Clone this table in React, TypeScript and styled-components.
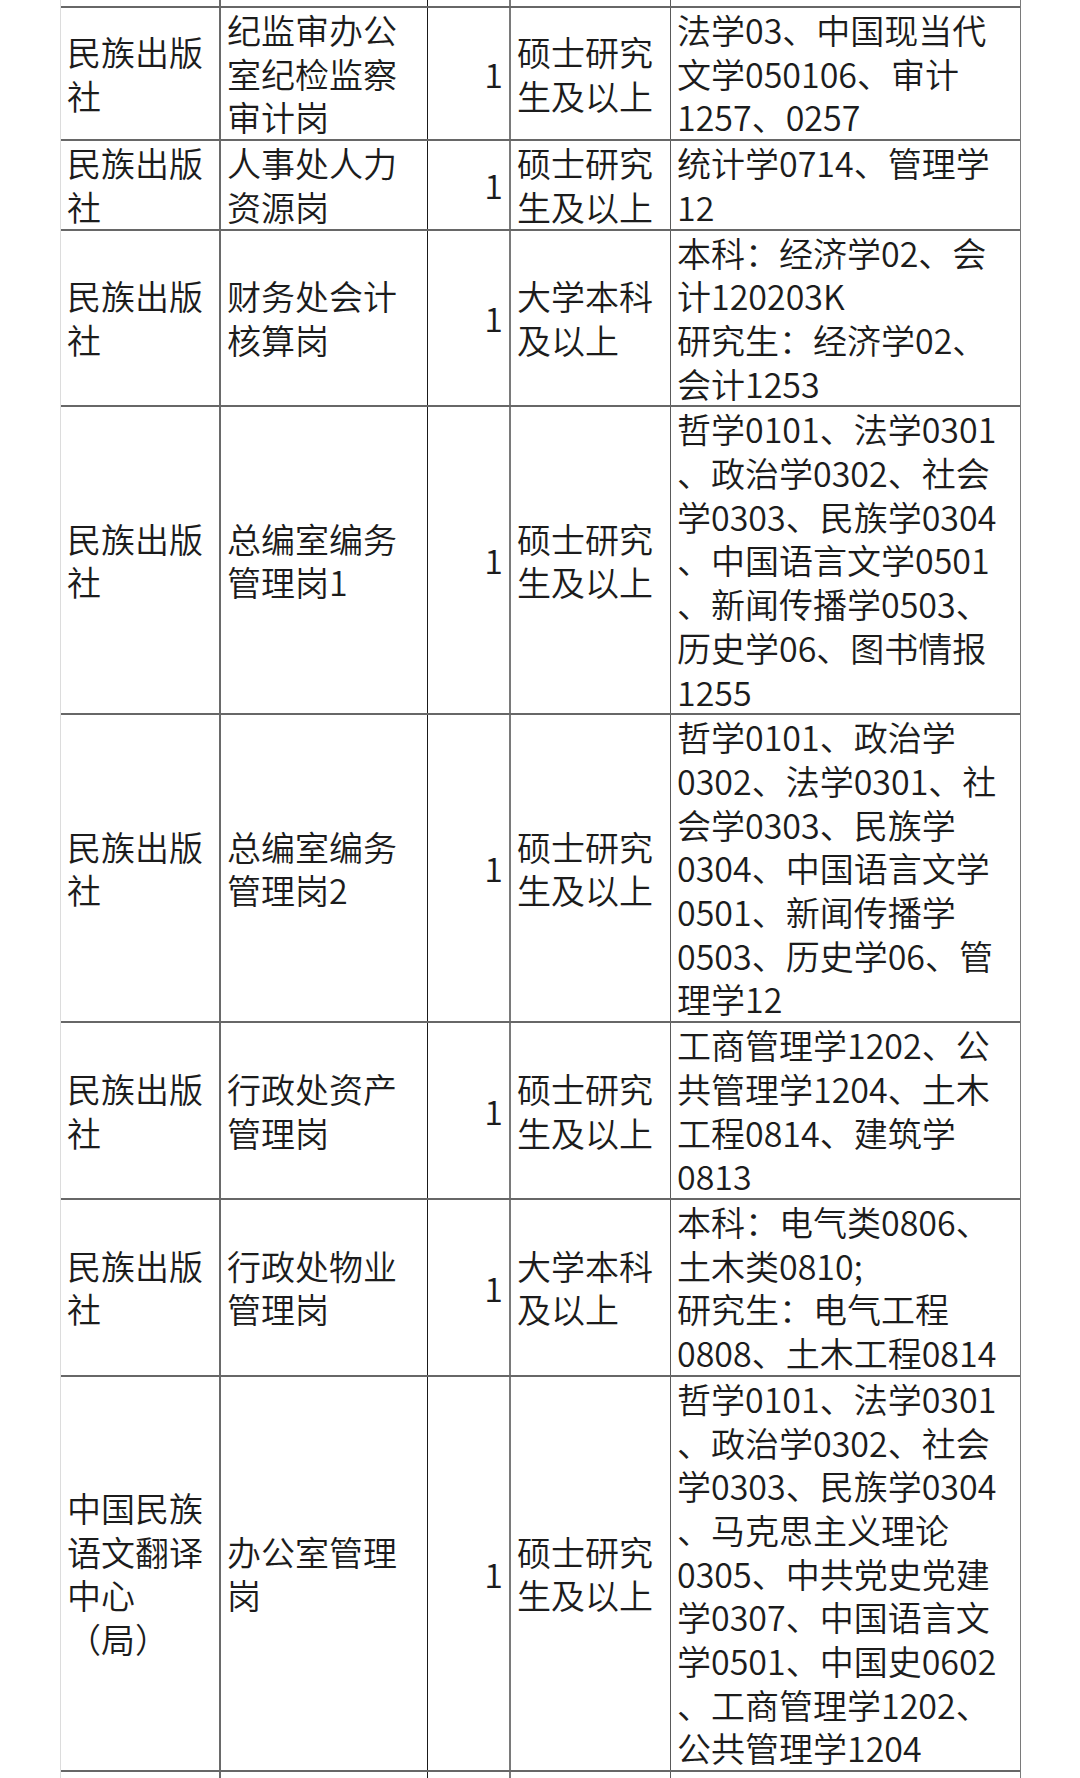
import React from "react";
import styled, { createGlobalStyle } from "styled-components";

const GlobalStyle = createGlobalStyle`
  html, body {
    margin: 0;
    padding: 0;
    background: #ffffff;
  }
  body {
    font-family: "Noto Sans CJK SC", "Noto Sans", sans-serif;
    color: #1c1c1c;
  }
`;

const Page = styled.div`
  width: 1080px;
  height: 1778px;
  overflow: hidden;
  padding-left: 60px;
  box-sizing: border-box;
  background: #fff;
`;

const Table = styled.div`
  width: 961px;
  display: flex;
  flex-direction: column;
  border-left: 1px solid #dcdcdc;
  border-right: 1px solid #7a7a7a;
  box-sizing: border-box;
`;

const Row = styled.div<{ $clip?: number }>`
  display: grid;
  grid-template-columns: 160px 207px 83px 160px 349px;
  border-bottom: 2px solid #676767;
  ${(p) => (p.$clip !== undefined ? `height: ${p.$clip}px; overflow: hidden;` : "")}
`;

type Align = "start" | "center" | "end";

const Cell = styled.div<{ $rule: string; $v: Align; $h: Align }>`
  display: flex;
  flex-direction: column;
  justify-content: ${(p) =>
    p.$v === "start" ? "flex-start" : p.$v === "end" ? "flex-end" : "center"};
  align-items: ${(p) =>
    p.$h === "end" ? "flex-end" : p.$h === "center" ? "center" : "flex-start"};
  padding: 0 6px;
  border-right: ${(p) => p.$rule};
  box-sizing: border-box;
  min-width: 0;
  &:last-child {
    border-right: none;
  }
`;

const Line = styled.span`
  display: block;
  white-space: nowrap;
  font-size: 34px;
  font-weight: 350;
  line-height: 43.7px;
  flex: none;
`;

const rules = [
  "2px solid #6a6a6a",
  "1px solid #1a1a1a",
  "2px solid #7a7a7a",
  "1px solid #5a5a5a",
  "none",
];

type RowData = {
  unit: string[];
  post: string[];
  count: string;
  edu: string[];
  major: string[];
};

const MS = ["硕士研究", "生及以上"];
const BK = ["大学本科", "及以上"];
const MZ = ["民族出版", "社"];

const rows: RowData[] = [
  {
    unit: MZ,
    post: ["纪监审办公", "室纪检监察", "审计岗"],
    count: "1",
    edu: MS,
    major: ["法学03、中国现当代", "文学050106、审计", "1257、0257"],
  },
  {
    unit: MZ,
    post: ["人事处人力", "资源岗"],
    count: "1",
    edu: MS,
    major: ["统计学0714、管理学", "12"],
  },
  {
    unit: MZ,
    post: ["财务处会计", "核算岗"],
    count: "1",
    edu: BK,
    major: ["本科：经济学02、会", "计120203K", "研究生：经济学02、", "会计1253"],
  },
  {
    unit: MZ,
    post: ["总编室编务", "管理岗1"],
    count: "1",
    edu: MS,
    major: [
      "哲学0101、法学0301",
      "、政治学0302、社会",
      "学0303、民族学0304",
      "、中国语言文学0501",
      "、新闻传播学0503、",
      "历史学06、图书情报",
      "1255",
    ],
  },
  {
    unit: MZ,
    post: ["总编室编务", "管理岗2"],
    count: "1",
    edu: MS,
    major: [
      "哲学0101、政治学",
      "0302、法学0301、社",
      "会学0303、民族学",
      "0304、中国语言文学",
      "0501、新闻传播学",
      "0503、历史学06、管",
      "理学12",
    ],
  },
  {
    unit: MZ,
    post: ["行政处资产", "管理岗"],
    count: "1",
    edu: MS,
    major: ["工商管理学1202、公", "共管理学1204、土木", "工程0814、建筑学", "0813"],
  },
  {
    unit: MZ,
    post: ["行政处物业", "管理岗"],
    count: "1",
    edu: BK,
    major: ["本科：电气类0806、", "土木类0810;", "研究生：电气工程", "0808、土木工程0814"],
  },
  {
    unit: ["中国民族", "语文翻译", "中心", "（局）"],
    post: ["办公室管理", "岗"],
    count: "1",
    edu: MS,
    major: [
      "哲学0101、法学0301",
      "、政治学0302、社会",
      "学0303、民族学0304",
      "、马克思主义理论",
      "0305、中共党史党建",
      "学0307、中国语言文",
      "学0501、中国史0602",
      "、工商管理学1202、",
      "公共管理学1204",
    ],
  },
];

const Lines: React.FC<{ items: string[] }> = ({ items }) => (
  <>
    {items.map((t, i) => (
      <Line key={i}>{t}</Line>
    ))}
  </>
);

const DataRow: React.FC<{ r: RowData }> = ({ r }) => (
  <Row>
    <Cell $rule={rules[0]} $v="center" $h="start">
      <Lines items={r.unit} />
    </Cell>
    <Cell $rule={rules[1]} $v="center" $h="start">
      <Lines items={r.post} />
    </Cell>
    <Cell $rule={rules[2]} $v="center" $h="end">
      <Line>{r.count}</Line>
    </Cell>
    <Cell $rule={rules[3]} $v="center" $h="start">
      <Lines items={r.edu} />
    </Cell>
    <Cell $rule={rules[4]} $v="start" $h="start">
      <Lines items={r.major} />
    </Cell>
  </Row>
);

const EdgeRow: React.FC<{ height: number; major?: string }> = ({ height, major }) => (
  <Row $clip={height}>
    <Cell $rule={rules[0]} $v="end" $h="start" />
    <Cell $rule={rules[1]} $v="end" $h="start" />
    <Cell $rule={rules[2]} $v="end" $h="end" />
    <Cell $rule={rules[3]} $v="end" $h="start" />
    <Cell $rule={rules[4]} $v="end" $h="start">
      {major ? <Line>{major}</Line> : null}
    </Cell>
  </Row>
);

export default function App() {
  return (
    <>
      <GlobalStyle />
      <Page>
        <Table>
          <EdgeRow height={6} major="理学" />
          {rows.map((r, i) => (
            <DataRow key={i} r={r} />
          ))}
          <EdgeRow height={40} />
        </Table>
      </Page>
    </>
  );
}
